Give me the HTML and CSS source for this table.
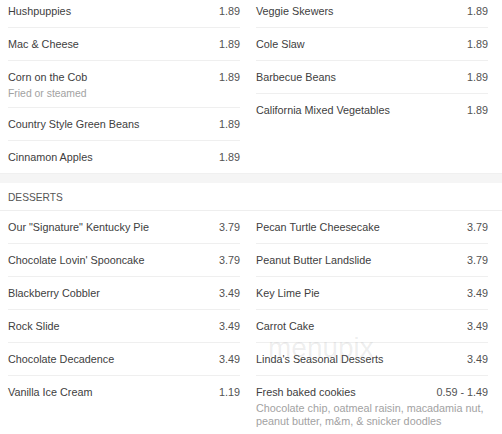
FILE: index.html
```html
<!DOCTYPE html>
<html>
<head>
<meta charset="utf-8">
<link rel="stylesheet" href="styles.css">
</head>
<body>
<div class="page">
  <section class="section first">
    <div class="cols">
      <div class="col">
        <div class="item"><div class="line"><span class="name">Hushpuppies</span><span class="price">1.89</span></div></div>
        <div class="item"><div class="line"><span class="name">Mac &amp; Cheese</span><span class="price">1.89</span></div></div>
        <div class="item"><div class="line"><span class="name">Corn on the Cob</span><span class="price">1.89</span></div><div class="desc">Fried or steamed</div></div>
        <div class="item"><div class="line"><span class="name">Country Style Green Beans</span><span class="price">1.89</span></div></div>
        <div class="item last"><div class="line"><span class="name">Cinnamon Apples</span><span class="price">1.89</span></div></div>
      </div>
      <div class="col">
        <div class="item"><div class="line"><span class="name">Veggie Skewers</span><span class="price">1.89</span></div></div>
        <div class="item"><div class="line"><span class="name">Cole Slaw</span><span class="price">1.89</span></div></div>
        <div class="item"><div class="line"><span class="name">Barbecue Beans</span><span class="price">1.89</span></div></div>
        <div class="item last"><div class="line"><span class="name">California Mixed Vegetables</span><span class="price">1.89</span></div></div>
      </div>
    </div>
  </section>
  <div class="band"></div>
  <section class="section">
    <h2 class="heading">DESSERTS</h2>
    <div class="cols">
      <div class="col">
        <div class="item"><div class="line"><span class="name">Our "Signature" Kentucky Pie</span><span class="price">3.79</span></div></div>
        <div class="item"><div class="line"><span class="name">Chocolate Lovin' Spooncake</span><span class="price">3.79</span></div></div>
        <div class="item"><div class="line"><span class="name">Blackberry Cobbler</span><span class="price">3.49</span></div></div>
        <div class="item"><div class="line"><span class="name">Rock Slide</span><span class="price">3.49</span></div></div>
        <div class="item"><div class="line"><span class="name">Chocolate Decadence</span><span class="price">3.49</span></div></div>
        <div class="item last"><div class="line"><span class="name">Vanilla Ice Cream</span><span class="price">1.19</span></div></div>
      </div>
      <div class="col">
        <div class="item"><div class="line"><span class="name">Pecan Turtle Cheesecake</span><span class="price">3.79</span></div></div>
        <div class="item"><div class="line"><span class="name">Peanut Butter Landslide</span><span class="price">3.79</span></div></div>
        <div class="item"><div class="line"><span class="name">Key Lime Pie</span><span class="price">3.49</span></div></div>
        <div class="item"><div class="line"><span class="name">Carrot Cake</span><span class="price">3.49</span></div></div>
        <div class="item"><div class="line"><span class="name">Linda's Seasonal Desserts</span><span class="price">3.49</span></div></div>
        <div class="item last"><div class="line"><span class="name">Fresh baked cookies</span><span class="price">0.59 - 1.49</span></div><div class="desc long">Chocolate chip, oatmeal raisin, macadamia nut, peanut butter, m&amp;m, &amp; snicker doodles</div></div>
      </div>
    </div>
  </section>
  <div class="watermark" aria-hidden="true">menupix</div>
</div>
</body>
</html>
```

FILE: styles.css
```css
html, body {
  margin: 0;
  padding: 0;
  background: #ffffff;
}

body {
  font-family: "Liberation Sans", Arial, sans-serif;
  color: #444444;
  overflow: hidden;
}

.page {
  position: relative;
  width: 502px;
  height: 434px;
}

.section.first {
  margin-top: -5px;
}

.cols {
  display: grid;
  grid-template-columns: 232px 232px;
  column-gap: 16px;
  padding-left: 8px;
}

.item {
  padding: 9px 0 9px;
  border-bottom: 1px solid #efefef;
}

.item.last {
  border-bottom: none;
}

.line {
  display: flex;
  justify-content: space-between;
  align-items: baseline;
  font-size: 10.8px;
  line-height: 14px;
}

.name {
  color: #404040;
}

.price {
  color: #525252;
}

.desc {
  margin-top: 4px;
  margin-bottom: -2px;
  font-size: 10.4px;
  line-height: 12px;
  color: #a2a2a2;
}

.desc.long {
  font-size: 10.8px;
  line-height: 13px;
  margin-top: 3px;
  margin-bottom: -2px;
}

.band {
  height: 9px;
  background: #f5f5f5;
  border-top: 1px solid #f0f0f0;
}

.heading {
  margin: 0;
  padding: 9px 8px 6px;
  font-size: 10.2px;
  line-height: 12px;
  font-weight: normal;
  color: #555555;
  border-bottom: 1px solid #eeeeee;
}

.watermark {
  position: absolute;
  left: 268px;
  top: 339px;
  font-size: 28px;
  line-height: 28px;
  color: rgba(90, 90, 90, 0.10);
  pointer-events: none;
}
```
